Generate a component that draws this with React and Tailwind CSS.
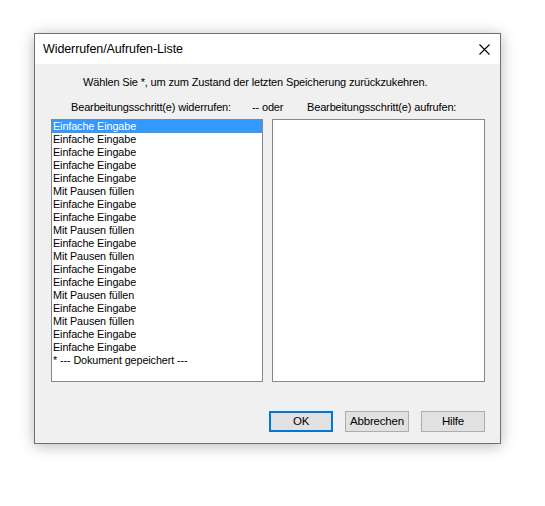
import React from "react";

const items = [
  "Einfache Eingabe",
  "Einfache Eingabe",
  "Einfache Eingabe",
  "Einfache Eingabe",
  "Einfache Eingabe",
  "Mit Pausen füllen",
  "Einfache Eingabe",
  "Einfache Eingabe",
  "Mit Pausen füllen",
  "Einfache Eingabe",
  "Mit Pausen füllen",
  "Einfache Eingabe",
  "Einfache Eingabe",
  "Mit Pausen füllen",
  "Einfache Eingabe",
  "Mit Pausen füllen",
  "Einfache Eingabe",
  "Einfache Eingabe",
  "* --- Dokument gepeichert ---",
];

function Button({ children, focused }) {
  return (
    <button
      className={
        "w-[64px] h-[21px] bg-[#e1e1e1] text-[11.5px] tracking-[-0.2px] leading-none text-black " +
        (focused ? "border-2 border-[#0078d7]" : "border border-[#adadad]")
      }
    >
      {children}
    </button>
  );
}

export default function App() {
  return (
    <div className="w-[545px] h-[506px] bg-white pl-[34px] pt-[33px] font-['Liberation_Sans',Arial,sans-serif] text-black">
      {/* dialog window */}
      <div className="w-[467px] h-[411px] border border-[#707070] bg-[#f0f0f0] flex flex-col shadow-[0_2px_14px_rgba(0,0,0,0.28)]">
        {/* title bar */}
        <div className="h-[30px] bg-white flex items-center justify-between pl-[8px] pr-[10px]">
          <span className="text-[12.5px] tracking-[-0.1px]">Widerrufen/Aufrufen-Liste</span>
          <svg width="11" height="11" viewBox="0 0 11 11" className="text-black">
            <path d="M0.5 0.5 L10.5 10.5 M10.5 0.5 L0.5 10.5" stroke="currentColor" strokeWidth="1.1" />
          </svg>
        </div>

        {/* body */}
        <div className="flex-1 flex flex-col text-[11px] tracking-[-0.15px] leading-[16px]">
          <p className="pt-[10px] pl-[48px]">
            Wählen Sie *, um zum Zustand der letzten Speicherung zurückzukehren.
          </p>

          <div className="flex mt-[9px] pl-[36px]">
            <span className="w-[181px]">Bearbeitungsschritt(e) widerrufen:</span>
            <span className="w-[55px]">-- oder</span>
            <span>Bearbeitungsschritt(e) aufrufen:</span>
          </div>

          <div className="flex gap-[9px] mt-[4px] pl-[16px]">
            <ul className="w-[212px] h-[263px] bg-white border border-[#828790] text-[10.8px] tracking-[-0.1px] leading-[13px]">
              {items.map((t, i) => (
                <li
                  key={i}
                  className={
                    "h-[13px] pl-[1px] whitespace-nowrap " +
                    (i === 0 ? "bg-[#3399ff] text-white" : "")
                  }
                >
                  {t}
                </li>
              ))}
            </ul>
            <ul className="w-[213px] h-[263px] bg-white border border-[#828790]"></ul>
          </div>

          <div className="flex justify-end gap-[12px] mt-[29px] pr-[15px]">
            <Button focused>OK</Button>
            <Button>Abbrechen</Button>
            <Button>Hilfe</Button>
          </div>
        </div>
      </div>
    </div>
  );
}
